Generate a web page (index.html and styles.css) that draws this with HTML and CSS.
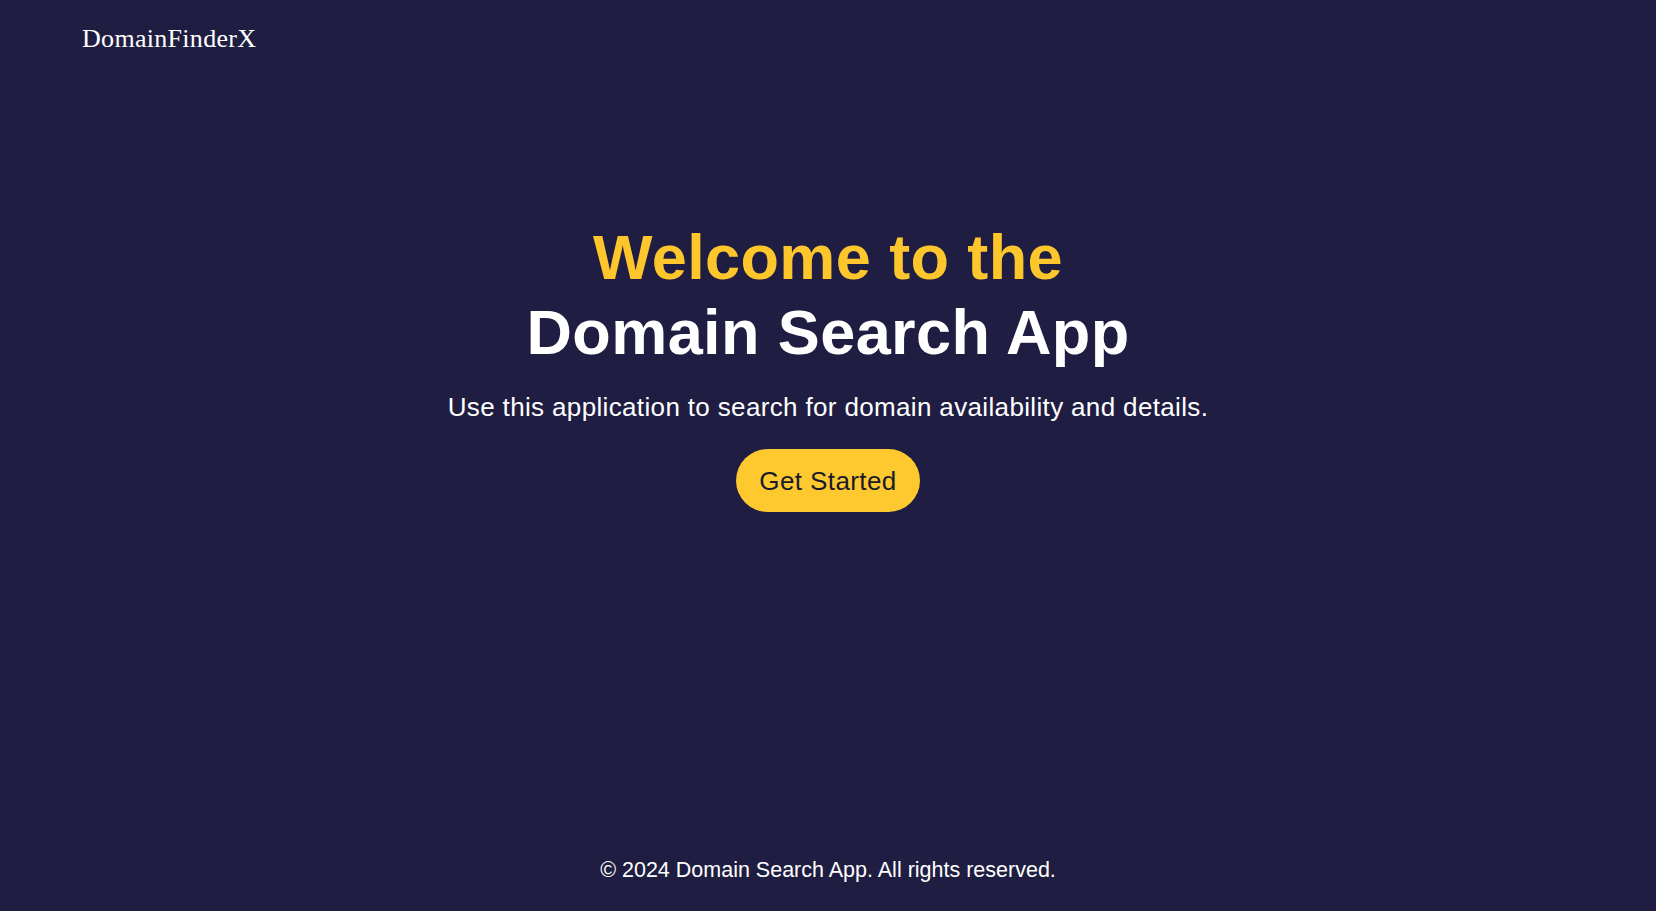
FILE: index.html
```html
<!DOCTYPE html>
<html lang="en">
<head>
<meta charset="utf-8">
<title>Domain Search App</title>
<link rel="stylesheet" href="styles.css">
</head>
<body>
<div class="page">
  <header class="site-header">
    <div class="logo">DomainFinderX</div>
  </header>
  <main class="hero">
    <h1 class="hero-title"><span class="accent">Welcome to the</span><br>Domain Search App</h1>
    <p class="hero-sub">Use this application to search for domain availability and details.</p>
    <button class="cta">Get Started</button>
  </main>
  <footer class="site-footer">© 2024 Domain Search App. All rights reserved.</footer>
</div>
</body>
</html>
```

FILE: styles.css
```css
html, body {
  margin: 0;
  padding: 0;
  background: #1f1e42;
}

.page {
  min-height: 100vh;
  display: flex;
  flex-direction: column;
  color: #ffffff;
  font-family: "Liberation Sans", Arial, sans-serif;
}

.site-header {
  padding: 25px 0 0 82px;
}

.logo {
  font-family: "Liberation Serif", "Times New Roman", serif;
  font-size: 26px;
  line-height: 28px;
  letter-spacing: 0.3px;
  color: #ffffff;
}

.hero {
  flex: 1;
  display: flex;
  flex-direction: column;
  align-items: center;
  padding-top: 167.2px;
  text-align: center;
}

.hero-title {
  margin: 0;
  font-size: 63px;
  line-height: 74.6px;
  font-weight: 700;
  letter-spacing: 0.4px;
  color: #ffffff;
}

.accent {
  color: #fcc62c;
}

.hero-sub {
  margin: 22.5px 0 0;
  font-size: 26px;
  line-height: 30px;
  letter-spacing: 0.35px;
  color: #ffffff;
}

.cta {
  margin-top: 27.5px;
  padding: 16.5px 23px;
  border: none;
  border-radius: 999px;
  background: #fdc92e;
  color: #1b1a2a;
  font-family: "Liberation Sans", Arial, sans-serif;
  font-size: 26px;
  line-height: 30px;
  letter-spacing: 0.4px;
  cursor: pointer;
}

.site-footer {
  padding: 0 0 27.6px;
  text-align: center;
  font-size: 21.5px;
  line-height: 25.6px;
  color: #ffffff;
}
```
